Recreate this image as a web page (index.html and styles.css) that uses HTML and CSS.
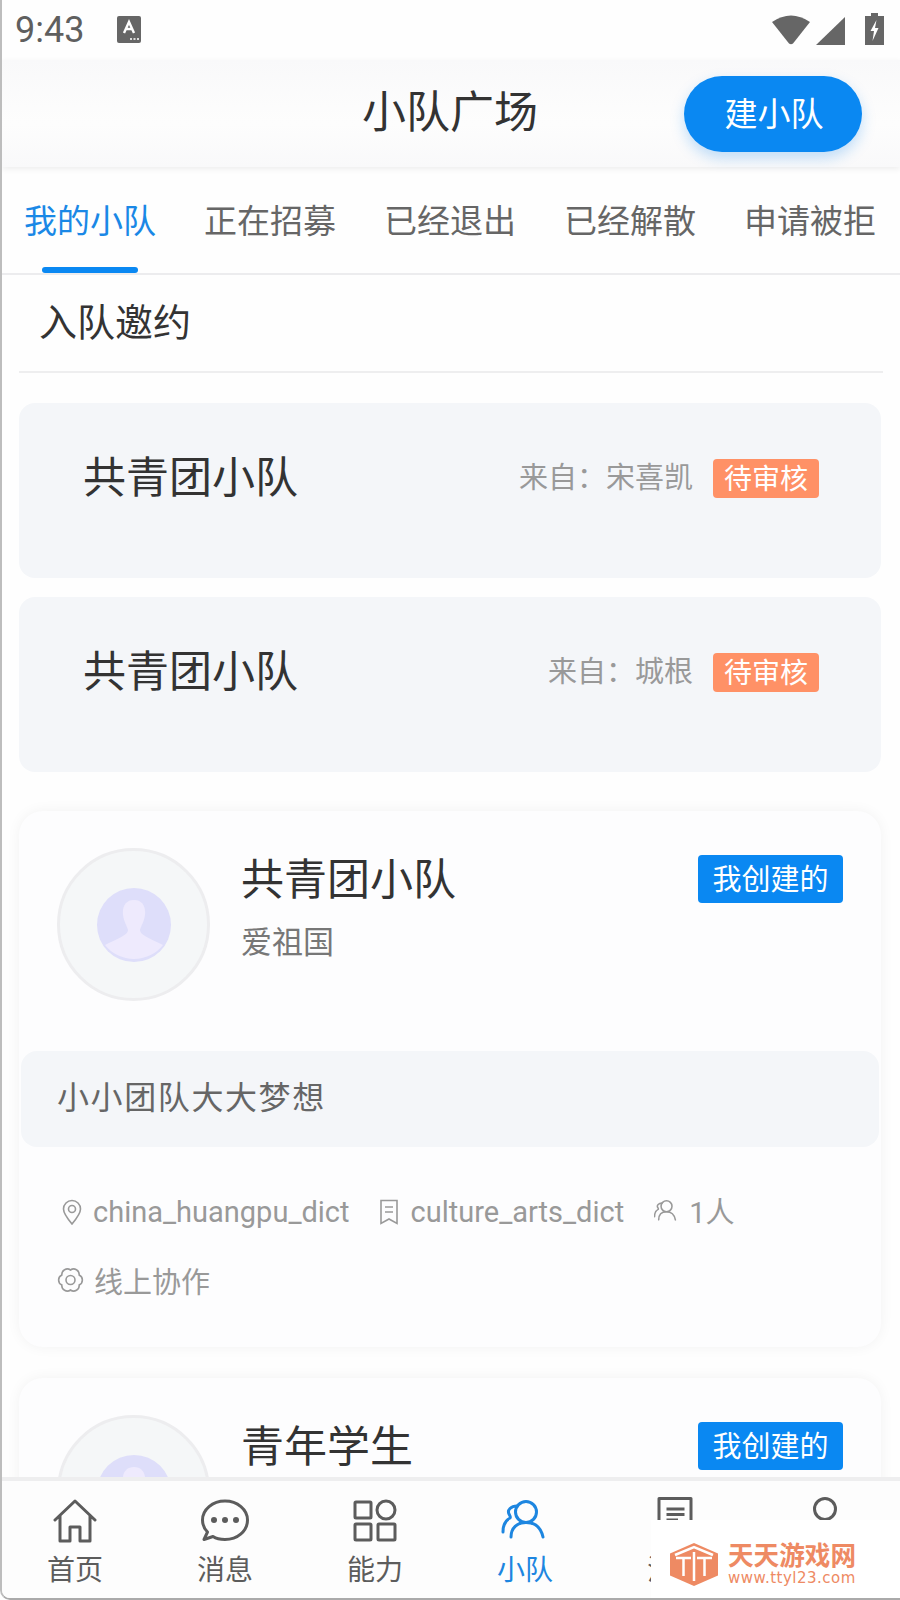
FILE: index.html
```html
<!DOCTYPE html>
<html lang="zh-CN">
<head>
    <meta charset="UTF-8">
    <meta name="viewport" content="width=device-width, initial-scale=1.0">
    <title>小队广场</title>
    <link rel="stylesheet" href="styles.css">
</head>
<body>
<div class="screen">
    <div class="status-bar">
        <span class="clock">9:43</span>
        <svg class="status-a" viewBox="0 0 24 28"><rect width="24" height="27" rx="2" fill="#666"/><path d="M7 17 L12 6 L17 17 M9 13 H15" fill="none" stroke="#fff" stroke-width="2.4"/><path d="M13 23 h2 M16.5 23 h2 M20 23 h2" stroke="#ddd" stroke-width="2"/></svg>
        <div class="status-icons">
            <svg width="38" height="31" viewBox="0 0 38 31"><path d="M0 8 Q19 -5 38 8 L21 29.500 Q19 31 17 29.500 Z" fill="#666"/></svg>
            <svg class="status-signal" width="29" height="28" viewBox="0 0 29 28"><path d="M29 0 V28 H0 Z" fill="#666"/></svg>
            <svg width="19" height="32" viewBox="0 0 19 32"><path d="M6 0 H13 V3 H19 V32 H0 V3 H6 Z" fill="#666"/><path d="M11.500 7 L5.500 18 H9 L7.500 28 L13.500 15 H10 Z" fill="#fff"/></svg>
        </div>
    </div>

    <header class="top-bar">
        <h1>小队广场</h1>
        <button class="create-btn">建小队</button>
    </header>

    <nav class="tabs">
        <a class="tab active">我的小队</a>
        <a class="tab">正在招募</a>
        <a class="tab">已经退出</a>
        <a class="tab">已经解散</a>
        <a class="tab">申请被拒</a>
    </nav>

    <main class="content">
        <div class="section-title"><span>入队邀约</span></div>

        <div class="invite">
            <span class="invite-name">共青团小队</span>
            <span class="invite-from">来自：宋喜凯</span>
            <span class="tag-orange">待审核</span>
        </div>
        <div class="invite">
            <span class="invite-name">共青团小队</span>
            <span class="invite-from">来自：城根</span>
            <span class="tag-orange">待审核</span>
        </div>

        <section class="team">
            <div class="team-head">
                <div class="avatar">
                    <svg viewBox="0 0 74 74" width="74" height="74"><circle cx="37" cy="37" r="37" fill="#dedefa"/><path d="M37 12 C45 12 49 18 48 27 C47 34 44 38 43 42 C43 47 52 50 66 57 A37 37 0 0 1 8 57 C22 50 31 47 31 42 C30 38 27 34 26 27 C25 18 29 12 37 12 Z" fill="#eeeafd"/></svg>
                </div>
                <div class="team-info">
                    <div class="team-name">共青团小队</div>
                    <div class="team-slogan">爱祖国</div>
                </div>
                <span class="tag-blue">我创建的</span>
            </div>
            <div class="team-motto"><span>小小团队大大梦想</span></div>
            <div class="team-meta">
                <span class="meta-item pin">
                    <svg width="20" height="26" viewBox="0 0 20 26"><path d="M10 25 C5 19 1.500 14.500 1.500 10 A8.500 8.500 0 0 1 18.500 10 C18.500 14.500 15 19 10 25 Z M10 6.500 A3.500 3.500 0 1 0 10 13.500 A3.500 3.500 0 1 0 10 6.500 Z" fill="none" stroke="#999" stroke-width="1.600"/></svg>
                    china_huangpu_dict
                </span>
                <span class="meta-item book">
                    <svg width="18" height="26" viewBox="0 0 18 26"><path d="M1 1.500 H17 V24.500 L9 20 L1 24.500 Z M5 8 H13 M5 13 H13" fill="none" stroke="#999" stroke-width="1.600"/></svg>
                    culture_arts_dict
                </span>
                <span class="meta-item people">
                    <svg width="24" height="23" viewBox="0 0 46 44"><g fill="none" stroke="#999" stroke-width="3" stroke-linecap="round"><circle cx="24" cy="12" r="10.500"/><path d="M9 38 C9 28 15 22.500 24 22.500 C33 22.500 39 28 41 38 M15 6 C9 6 5 10 7 14 C8 16 9 17 8 18 C4 20 1 25 1 32"/></g></svg>
                    1人
                </span>
                <span class="meta-item gear">
                    <svg width="27" height="26" viewBox="0 0 27 26"><path d="M22.160 8 A5.500 5.500 0 0 1 22.160 18 A5.500 5.500 0 0 1 13.500 23 A5.500 5.500 0 0 1 4.840 18 A5.500 5.500 0 0 1 4.840 8 A5.500 5.500 0 0 1 13.500 3 A5.500 5.500 0 0 1 22.160 8 Z" fill="none" stroke="#999" stroke-width="1.600"/><circle cx="13.500" cy="13" r="4.500" fill="none" stroke="#999" stroke-width="1.600"/></svg>
                    线上协作
                </span>
            </div>
        </section>

        <section class="team">
            <div class="team-head">
                <div class="avatar">
                    <svg viewBox="0 0 74 74" width="74" height="74"><circle cx="37" cy="37" r="37" fill="#dedefa"/><path d="M37 12 C45 12 49 18 48 27 C47 34 44 38 43 42 C43 47 52 50 66 57 A37 37 0 0 1 8 57 C22 50 31 47 31 42 C30 38 27 34 26 27 C25 18 29 12 37 12 Z" fill="#eeeafd"/></svg>
                </div>
                <div class="team-info">
                    <div class="team-name">青年学生</div>
                </div>
                <span class="tag-blue">我创建的</span>
            </div>
        </section>
    </main>

    <footer class="bottom-nav">
        <a class="nav-item">
            <svg width="44" height="44" viewBox="0 0 44 44"><path d="M2 20 L22 1 L42 20 M7 16 V41 H17 V27 H27 V41 H37 V16" fill="none" stroke="#5c5c5c" stroke-width="3" stroke-linejoin="round" stroke-linecap="round"/></svg>
            <span>首页</span>
        </a>
        <a class="nav-item">
            <svg width="48" height="44" viewBox="0 0 48 44"><path d="M24 1 C36.500 1 46.500 9.500 46.500 20 C46.500 31 36.500 39.500 24 39.500 C19 39.500 15 38.500 12 36.500 L3 39.500 L6.500 32 C3 28.500 1.500 24.500 1.500 20 C1.500 9.500 11.500 1 24 1 Z" fill="none" stroke="#5c5c5c" stroke-width="3" stroke-linejoin="round"/><circle cx="13" cy="20" r="3" fill="#5c5c5c"/><circle cx="24" cy="20" r="3" fill="#5c5c5c"/><circle cx="35" cy="20" r="3" fill="#5c5c5c"/></svg>
            <span>消息</span>
        </a>
        <a class="nav-item">
            <svg width="44" height="44" viewBox="0 0 44 44"><g fill="none" stroke="#5c5c5c" stroke-width="3"><rect x="2" y="2" width="16" height="16" rx="1"/><circle cx="33" cy="10" r="9"/><rect x="2" y="24" width="16" height="16" rx="1"/><rect x="25" y="24" width="17" height="16" rx="1"/></g></svg>
            <span>能力</span>
        </a>
        <a class="nav-item active">
            <svg width="46" height="44" viewBox="0 0 46 44"><g fill="none" stroke="#1d86e0" stroke-width="3" stroke-linecap="round"><circle cx="24" cy="12" r="10.500"/><path d="M9 37 C9 28 15 22.500 24 22.500 C33 22.500 39 28 41 37 M15 6 C9 6 5 10 7 14 C8 16 9 17 8 18 C4 20 1 25 1 32"/></g></svg>
            <span>小队</span>
        </a>
        <a class="nav-item">
            <svg class="nav-doc" width="36" height="44" viewBox="0 0 36 44"><path d="M2 -1.500 H34 V40 H2 Z M9.500 9 H27.500 M9.500 14.500 H27.500 M9.500 20 H21" fill="none" stroke="#5c5c5c" stroke-width="3" stroke-linejoin="round"/></svg>
            <span>活动</span>
        </a>
        <a class="nav-item">
            <svg width="26" height="44" viewBox="0 0 26 44"><circle cx="13" cy="9" r="10.500" fill="none" stroke="#5c5c5c" stroke-width="3"/></svg>
        </a>
    </footer>

    <div class="watermark">
        <svg width="48" height="43" viewBox="0 0 48 43"><path d="M24 0 L48 10.500 V32.500 L24 43 L0 32.500 V10.500 Z" fill="#ee8a63"/><path d="M5 12 L24 4 L43 12 M6 15 H21 M13.500 15 V33 M27 15 H42 M34.500 15 V33 M24 9 V38" fill="none" stroke="#fff" stroke-width="2.500"/></svg>
        <div class="wm-text">
            <div class="wm-name">天天游戏网</div>
            <div class="wm-url">www.ttyl23.com</div>
        </div>
    </div>
</div>
</body>
</html>
```

FILE: styles.css
```css
* { box-sizing: border-box; }
body { margin: 0; background: #fff; font-family: "Noto Sans CJK SC", Roboto, sans-serif; }
a { text-decoration: none; color: inherit; }

.screen { position: relative; width: 900px; height: 1600px; overflow: hidden; display: flex; flex-direction: column; background: #fefefe; border-left: 2px solid #bdbdbd; border-bottom: 2px solid #aaa; border-bottom-left-radius: 10px; }

.status-bar { height: 60px; flex: none; display: flex; align-items: center; padding: 0 16px 0 13px; }
.clock { font-family: Roboto, sans-serif; font-size: 36px; color: #5f5f5f; width: 102px; }
.status-a { width: 24px; height: 28px; }
.status-icons { margin: 0 0 3px auto; display: flex; align-items: flex-end; }
.status-signal { margin: 0 20px 0 6px; }

.top-bar { height: 107px; flex: none; position: relative; display: flex; align-items: center; justify-content: center; background: linear-gradient(#f9f9fa, #fdfdfd 60%, #f9f9fa); box-shadow: 0 2px 6px rgba(0,0,0,0.07); z-index: 1; }
.top-bar h1 { margin: 0 0 10px -2px; font-size: 44px; font-weight: 400; color: #333; line-height: 1; }
.create-btn { position: absolute; left: 682px; top: 16px; width: 178px; height: 76px; padding: 0 0 5px 2px; border: none; border-radius: 38px; background: #0a88f2; color: #fff; font-family: inherit; font-size: 33px; box-shadow: 0 6px 14px rgba(10,132,240,0.25); }

.tabs { height: 108px; flex: none; display: grid; grid-template-columns: repeat(5, 180px); margin-left: -2px; border-bottom: 2px solid #ececee; }
.tab { position: relative; text-align: center; font-size: 33px; line-height: 104px; color: #666; }
.tab.active { color: #1a88e6; }
.tab.active::after { content: ""; position: absolute; left: 42px; bottom: 0; width: 96px; height: 6px; border-radius: 3px; background: #0a88f2; }

.content { flex: 1; min-height: 0; overflow: hidden; padding: 0 19px 0 17px; }
.section-title { height: 98px; margin: 0 -2px 30px 0; padding: 0 0 8px 20px; display: flex; align-items: center; border-bottom: 2px solid #eeeeef; font-size: 38px; color: #333; }

.invite { height: 175px; padding: 45px 62px 0 64px; display: flex; align-items: flex-start; background: #f4f6f9; border-radius: 16px; }
.invite + .invite { margin-top: 19px; }
.invite-name { font-size: 43px; line-height: 52px; color: #333; margin-right: auto; }
.invite-from { margin: 5px 20px 0 0; font-size: 29px; line-height: 44px; color: #999; }
.tag-orange { height: 39px; width: 106px; margin-top: 11px; text-align: center; border-radius: 4px; background: #ff9166; color: #fff; font-size: 28px; line-height: 37px; }

.team { height: 536px; background: #fdfdfe; border-radius: 24px; box-shadow: 0 0 14px rgba(0,0,0,0.05); }
.invite + .team { margin-top: 39px; }
.team + .team { margin-top: 31px; }

.team-head { height: 240px; padding: 37px 38px 0 38px; display: flex; align-items: flex-start; }
.avatar { width: 153px; height: 153px; flex: none; display: flex; align-items: center; justify-content: center; border-radius: 50%; background: #f5f7f8; border: 3px solid #ededef; }
.team-info { margin-left: 31px; margin-right: auto; }
.team-name { margin-top: -2px; font-size: 43px; line-height: 60px; color: #333; }
.team-slogan { margin-top: 12px; font-size: 31px; line-height: 44px; color: #777; }
.tag-blue { width: 145px; height: 48px; margin-top: 7px; text-align: center; border-radius: 4px; background: #0a88f2; color: #fff; font-size: 29px; line-height: 45px; }

.team-motto { height: 96px; margin: 0 2px; padding: 0 0 8px 36px; display: flex; align-items: center; background: #f4f6f9; border-radius: 16px; font-size: 32px; letter-spacing: 1.600px; color: #666; }

.team-meta { padding: 41px 38px 0; display: flex; flex-wrap: wrap; row-gap: 27px; column-gap: 30px; font-family: Roboto, "Noto Sans CJK SC", sans-serif; font-size: 29px; color: #999; }
.meta-item { height: 43px; display: flex; align-items: center; gap: 11px; }
.pin { margin-left: 5px; padding-top: 4px; }
.book { padding-top: 4px; gap: 13px; }
.people svg { margin-top: 4px; }
.gear { gap: 10px; }

.bottom-nav { height: 121px; flex: none; margin-left: -2px; display: grid; grid-template-columns: repeat(6, 150px); background: #fdfdfd; border-top: 4px solid #eeeeef; position: relative; z-index: 1; }
.nav-item { display: flex; flex-direction: column; align-items: center; padding-top: 19px; color: #5c5c5c; font-size: 28px; line-height: 40px; }
.nav-item svg { overflow: visible; flex: none; }
.nav-item span { margin-top: 4px; }
.nav-item.active { color: #1d86e0; }

.watermark { position: absolute; right: 0; bottom: -2px; z-index: 2; width: 249px; height: 80px; padding: 23px 0 0 19px; display: flex; gap: 10px; background: #fff; }
.wm-name { font-size: 25.600px; font-weight: 700; line-height: 26px; color: #ee8a63; margin-top: -2px; }
.wm-url { margin-top: 1px; font-family: "DejaVu Sans", sans-serif; font-size: 15px; line-height: 20px; letter-spacing: 0.500px; color: #ee8a63; }
```
